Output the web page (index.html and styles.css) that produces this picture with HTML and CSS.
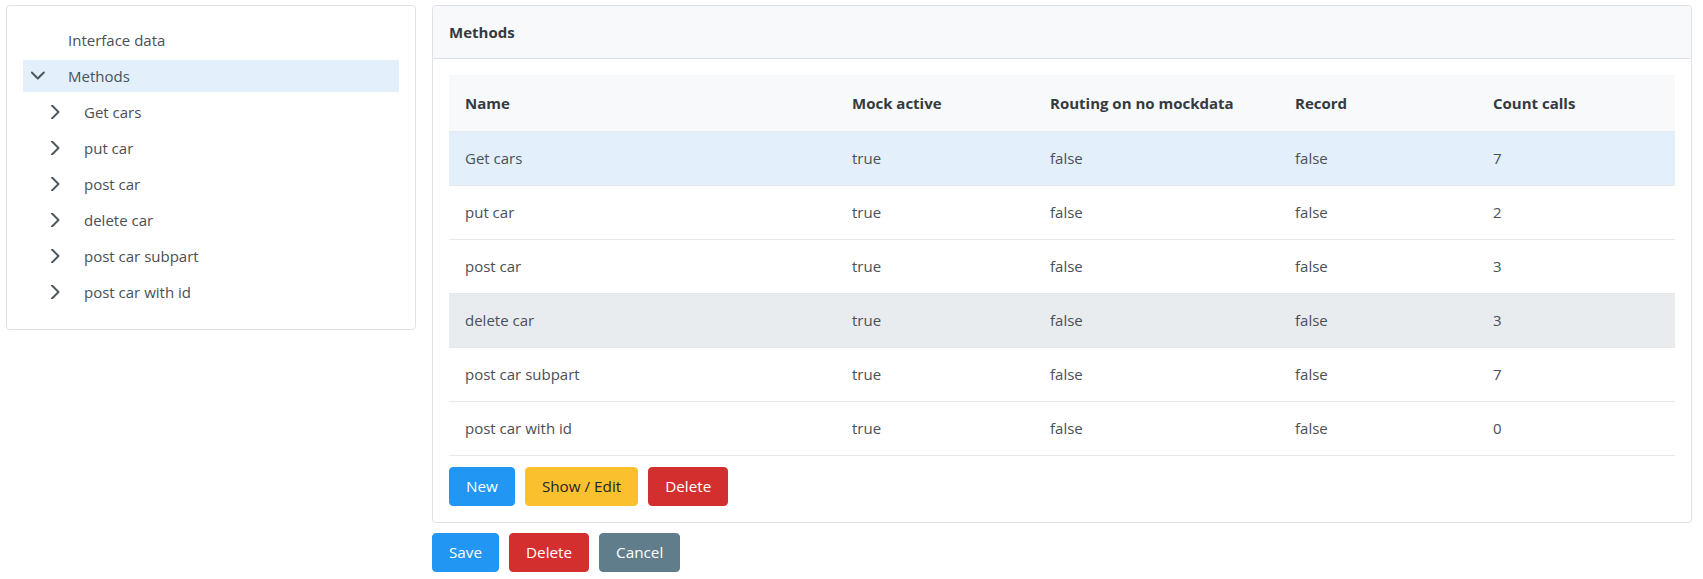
FILE: index.html
```html
<!DOCTYPE html>
<html lang="en">
<head>
<meta charset="utf-8">
<title>Methods</title>
<link rel="stylesheet" href="styles.css">
</head>
<body>
<div class="page">
  <aside class="card tree-card">
    <ul class="tree">
      <li class="node">
        <div class="node-row"><span class="toggler"></span><span class="label">Interface data</span></div>
      </li>
      <li class="node">
        <div class="node-row selected">
          <span class="toggler"><svg class="chev" viewBox="0 0 14 14" width="14" height="14"><polyline points="0.8,3.5 6.8,9.5 12.8,3.5"/></svg></span>
          <span class="label">Methods</span>
        </div>
        <ul class="children">
          <li class="node"><div class="node-row"><span class="toggler"><svg class="chev" viewBox="0 0 14 14" width="14" height="14"><polyline points="5,0.5 11.5,7 5,13.5"/></svg></span><span class="label">Get cars</span></div></li>
          <li class="node"><div class="node-row"><span class="toggler"><svg class="chev" viewBox="0 0 14 14" width="14" height="14"><polyline points="5,0.5 11.5,7 5,13.5"/></svg></span><span class="label">put car</span></div></li>
          <li class="node"><div class="node-row"><span class="toggler"><svg class="chev" viewBox="0 0 14 14" width="14" height="14"><polyline points="5,0.5 11.5,7 5,13.5"/></svg></span><span class="label">post car</span></div></li>
          <li class="node"><div class="node-row"><span class="toggler"><svg class="chev" viewBox="0 0 14 14" width="14" height="14"><polyline points="5,0.5 11.5,7 5,13.5"/></svg></span><span class="label">delete car</span></div></li>
          <li class="node"><div class="node-row"><span class="toggler"><svg class="chev" viewBox="0 0 14 14" width="14" height="14"><polyline points="5,0.5 11.5,7 5,13.5"/></svg></span><span class="label">post car subpart</span></div></li>
          <li class="node"><div class="node-row"><span class="toggler"><svg class="chev" viewBox="0 0 14 14" width="14" height="14"><polyline points="5,0.5 11.5,7 5,13.5"/></svg></span><span class="label">post car with id</span></div></li>
        </ul>
      </li>
    </ul>
  </aside>

  <main class="main">
    <section class="card panel">
      <header class="panel-header">Methods</header>
      <div class="panel-body">
        <table class="grid">
          <colgroup>
            <col class="c-name"><col class="c-mock"><col class="c-route"><col class="c-record"><col class="c-count">
          </colgroup>
          <thead>
            <tr><th>Name</th><th>Mock active</th><th>Routing on no mockdata</th><th>Record</th><th>Count calls</th></tr>
          </thead>
          <tbody>
            <tr class="selected"><td>Get cars</td><td>true</td><td>false</td><td>false</td><td>7</td></tr>
            <tr><td>put car</td><td>true</td><td>false</td><td>false</td><td>2</td></tr>
            <tr><td>post car</td><td>true</td><td>false</td><td>false</td><td>3</td></tr>
            <tr class="hover"><td>delete car</td><td>true</td><td>false</td><td>false</td><td>3</td></tr>
            <tr><td>post car subpart</td><td>true</td><td>false</td><td>false</td><td>7</td></tr>
            <tr><td>post car with id</td><td>true</td><td>false</td><td>false</td><td>0</td></tr>
          </tbody>
        </table>
        <div class="actions inner-actions">
          <button class="btn btn-blue">New</button>
          <button class="btn btn-yellow">Show / Edit</button>
          <button class="btn btn-red">Delete</button>
        </div>
      </div>
    </section>
    <div class="actions footer-actions">
      <button class="btn btn-blue">Save</button>
      <button class="btn btn-red">Delete</button>
      <button class="btn btn-grey">Cancel</button>
    </div>
  </main>
</div>
</body>
</html>
```

FILE: styles.css
```css
* { box-sizing: border-box; }

body {
  margin: 0;
  font-family: "Open Sans", "Noto Sans", sans-serif;
  font-size: 15px;
  color: #495057;
  background: #ffffff;
}

.page {
  display: flex;
  align-items: flex-start;
  gap: 16px;
  padding: 5px 11px 0 6px;
}

.card {
  border: 1px solid #dee2e6;
  border-radius: 4px;
  background: #ffffff;
}

/* ---------- tree ---------- */
.tree-card {
  width: 410px;
  flex: none;
  padding: 18px 16px 21px;
}

.tree, .children {
  list-style: none;
  margin: 0;
  padding: 0;
}

.tree {
  display: flex;
  flex-direction: column;
  gap: 4px;
}

.children {
  display: flex;
  flex-direction: column;
  gap: 4px;
  margin-top: 4px;
}

.node-row {
  display: flex;
  align-items: center;
  height: 32px;
}

.children .node-row {
  padding-left: 16px;
}

.node-row.selected {
  background: #e3f0fc;
}

.toggler {
  flex: none;
  width: 45px;
  height: 32px;
  display: flex;
  align-items: center;
  padding-left: 8px;
}

.chev {
  fill: none;
  stroke: #4f565e;
  stroke-width: 2;
  stroke-linecap: round;
  stroke-linejoin: round;
}

.label {
  line-height: 20px;
}

/* ---------- main panel ---------- */
.main {
  flex: 1;
  min-width: 0;
}

.panel-header {
  height: 53px;
  display: flex;
  align-items: center;
  padding: 0 16px;
  background: #f8f9fa;
  border-bottom: 1px solid #dee2e6;
  border-radius: 4px 4px 0 0;
  font-weight: 700;
  color: #343a40;
}

.panel-body {
  padding: 16px;
}

.grid {
  width: 100%;
  table-layout: fixed;
  border-collapse: collapse;
}

.c-name { width: 387px; }
.c-mock { width: 198px; }
.c-route { width: 245px; }
.c-record { width: 198px; }
.c-count { width: 198px; }

.grid th {
  height: 56px;
  padding: 0 16px;
  text-align: left;
  font-weight: 700;
  color: #343a40;
  background: #f8f9fa;
  border-bottom: 1px solid #e9ecef;
}

.grid td {
  height: 54px;
  padding: 0 16px;
  border-bottom: 1px solid #e6e8ea;
  white-space: nowrap;
}

.grid tr.selected td {
  background: #e3f0fc;
}

.grid tr.hover td {
  background: #e9ecef;
}

/* ---------- buttons ---------- */
.actions {
  display: flex;
  gap: 10px;
}

.inner-actions {
  margin-top: 11px;
}

.footer-actions {
  margin-top: 10px;
}

.btn {
  height: 39px;
  padding: 0 16px;
  border: 1px solid transparent;
  border-radius: 4px;
  font-family: inherit;
  font-size: 15.25px;
  color: #ffffff;
  cursor: pointer;
}

.btn-blue { background: #2196f3; border-color: #2196f3; }
.btn-yellow { background: #fbc02d; border-color: #fbc02d; color: #212529; }
.btn-red { background: #d32f2f; border-color: #d32f2f; }
.btn-grey { background: #607d8b; border-color: #607d8b; }
```
